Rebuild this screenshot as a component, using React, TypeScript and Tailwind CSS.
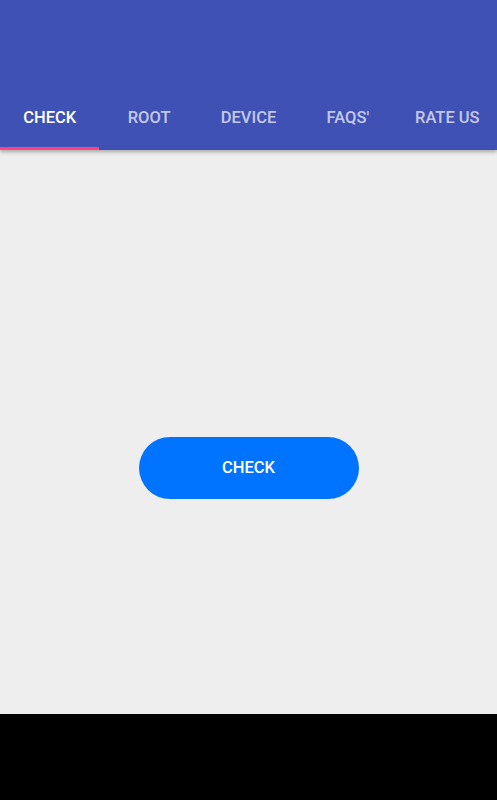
export default function App() {
  const tabs = ["CHECK", "ROOT", "DEVICE", "FAQS'", "RATE US"];
  return (
    <div className="flex h-[800px] w-[497px] flex-col bg-black font-['Roboto',sans-serif]">
      {/* App bar + tabs */}
      <div className="relative z-10 flex h-[150px] shrink-0 flex-col justify-end bg-[#3f51b5] shadow-[0_2px_4px_rgba(0,0,0,0.3)]">
        <div className="flex h-[60px]">
          {tabs.map((t, i) => (
            <div
              key={t}
              className={`flex flex-1 items-center justify-center border-b-[3px] text-[16.5px] font-medium ${
                i === 0 ? "border-[#ff4081] text-white" : "border-transparent text-white/70"
              }`}
            >
              {t}
            </div>
          ))}
        </div>
      </div>

      {/* Content */}
      <div className="flex h-[564px] shrink-0 items-center justify-center bg-[#eeeeee]">
        <button className="mt-[72px] flex h-[62px] w-[220px] items-center justify-center rounded-full bg-[#0073ff] text-[16.5px] font-medium text-white">
          CHECK
        </button>
      </div>
    </div>
  );
}
